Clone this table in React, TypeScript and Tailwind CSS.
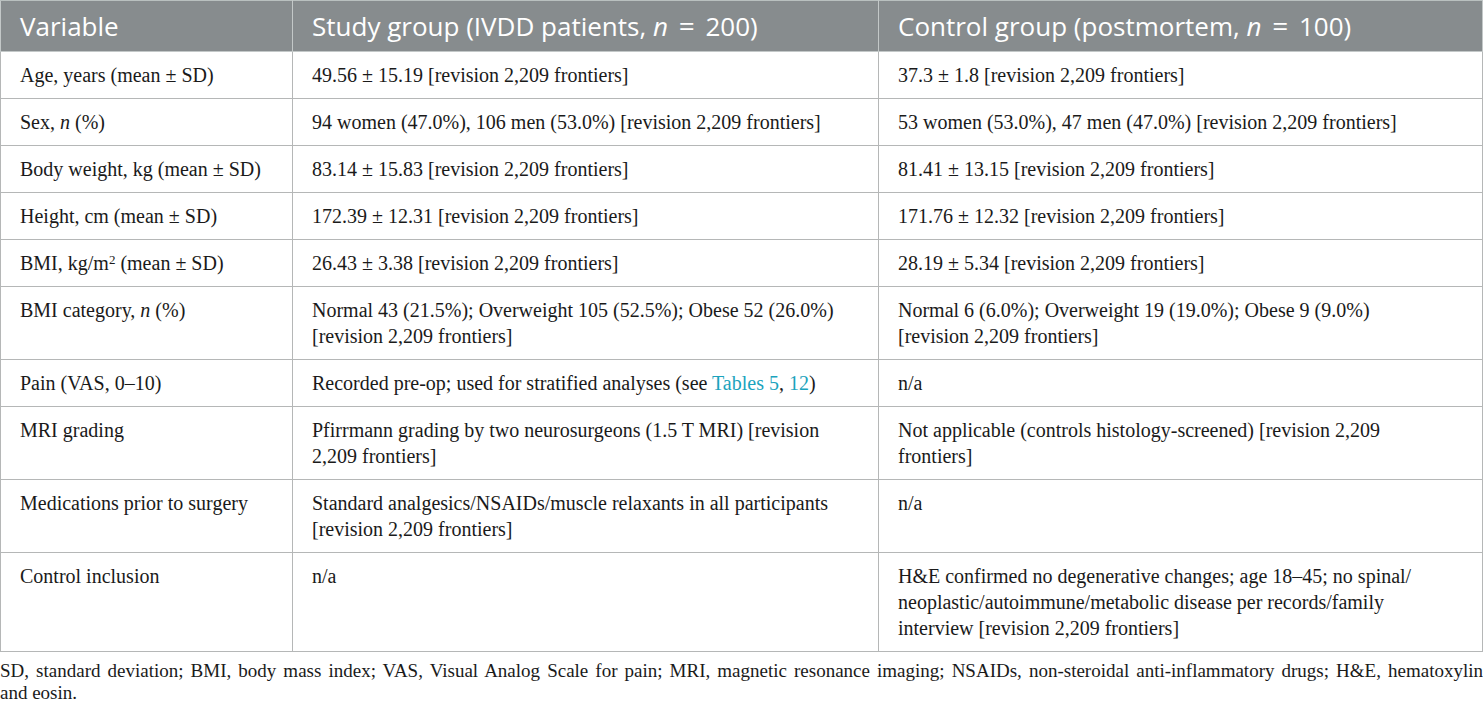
import React from "react";

type Row = {
  label: React.ReactNode;
  study: React.ReactNode;
  control: React.ReactNode;
};

const rev = "[revision 2,209 frontiers]";

const rows: Row[] = [
  {
    label: "Age, years (mean ± SD)",
    study: `49.56 ± 15.19 ${rev}`,
    control: `37.3 ± 1.8 ${rev}`,
  },
  {
    label: (
      <>
        Sex, <i>n</i> (%)
      </>
    ),
    study: `94 women (47.0%), 106 men (53.0%) ${rev}`,
    control: `53 women (53.0%), 47 men (47.0%) ${rev}`,
  },
  {
    label: "Body weight, kg (mean ± SD)",
    study: `83.14 ± 15.83 ${rev}`,
    control: `81.41 ± 13.15 ${rev}`,
  },
  {
    label: "Height, cm (mean ± SD)",
    study: `172.39 ± 12.31 ${rev}`,
    control: `171.76 ± 12.32 ${rev}`,
  },
  {
    label: (
      <>
        BMI, kg/m<sup className="text-[13px]">2</sup> (mean ± SD)
      </>
    ),
    study: `26.43 ± 3.38 ${rev}`,
    control: `28.19 ± 5.34 ${rev}`,
  },
  {
    label: (
      <>
        BMI category, <i>n</i> (%)
      </>
    ),
    study: (
      <>
        Normal 43 (21.5%); Overweight 105 (52.5%); Obese 52 (26.0%)
        <br />
        {rev}
      </>
    ),
    control: (
      <>
        Normal 6 (6.0%); Overweight 19 (19.0%); Obese 9 (9.0%)
        <br />
        {rev}
      </>
    ),
  },
  {
    label: "Pain (VAS, 0–10)",
    study: (
      <>
        Recorded pre-op; used for stratified analyses (see{" "}
        <span className="text-[#1ba3bd]">Tables 5</span>,{" "}
        <span className="text-[#1ba3bd]">12</span>)
      </>
    ),
    control: "n/a",
  },
  {
    label: "MRI grading",
    study: (
      <>
        Pfirrmann grading by two neurosurgeons (1.5 T MRI) [revision
        <br />
        2,209 frontiers]
      </>
    ),
    control: (
      <>
        Not applicable (controls histology-screened) [revision 2,209
        <br />
        frontiers]
      </>
    ),
  },
  {
    label: "Medications prior to surgery",
    study: (
      <>
        Standard analgesics/NSAIDs/muscle relaxants in all participants
        <br />
        {rev}
      </>
    ),
    control: "n/a",
  },
  {
    label: "Control inclusion",
    study: "n/a",
    control: (
      <>
        H&amp;E confirmed no degenerative changes; age 18–45; no spinal/
        <br />
        neoplastic/autoimmune/metabolic disease per records/family
        <br />
        interview {rev}
      </>
    ),
  },
];

const cell =
  "border border-[#b5b7b7] px-[19px] py-[10px] align-top text-left font-normal";

const head =
  "border border-[#c3c8c8] border-t-[#b9c0bf] px-[19px] py-[10px] text-left font-normal";

const Eq = () => <span className="mx-[4px] text-[28px] leading-[0]">=</span>;

export default function App() {
  return (
    <div className="w-[1483px] bg-white text-[#1a1a1a] [font-family:'Liberation_Serif',serif]">
      <table className="w-full border-collapse table-fixed text-[20px] leading-[26px] [font-family:'Liberation_Serif',serif]">
        <colgroup>
          <col className="w-[292px]" />
          <col className="w-[586px]" />
          <col />
        </colgroup>
        <thead>
          <tr className="bg-[#878c8e] text-white [font-family:'Open_Sans',sans-serif] text-[26px] leading-[30px]">
            <th className={head}>Variable</th>
            <th className={head}>
              Study group (IVDD patients, <i>n</i> <Eq /> 200)
            </th>
            <th className={head}>
              Control group (postmortem, <i>n</i> <Eq /> 100)
            </th>
          </tr>
        </thead>
        <tbody>
          {rows.map((r, i) => (
            <tr key={i}>
              <td className={cell}>{r.label}</td>
              <td className={cell}>{r.study}</td>
              <td className={cell}>{r.control}</td>
            </tr>
          ))}
        </tbody>
      </table>
      <div className="pt-[8px] text-[19px] leading-[22px]">
        <p className="text-justify [text-align-last:justify] whitespace-nowrap">
          SD, standard deviation; BMI, body mass index; VAS, Visual Analog Scale
          for pain; MRI, magnetic resonance imaging; NSAIDs, non-steroidal
          anti-inflammatory drugs; H&amp;E, hematoxylin
        </p>
        <p>and eosin.</p>
      </div>
    </div>
  );
}
